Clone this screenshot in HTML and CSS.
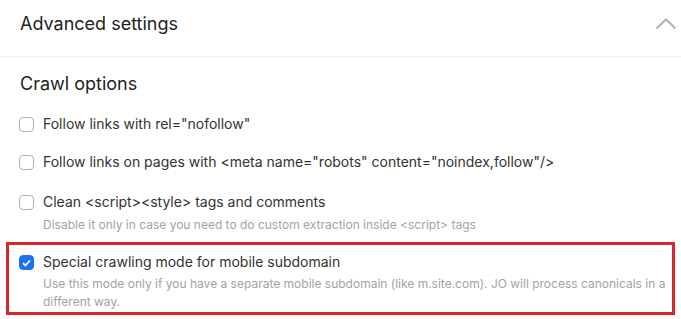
FILE: index.html
```html
<!DOCTYPE html>
<html lang="en">
<head>
    <meta charset="UTF-8">
    <title>Advanced settings</title>
    <link rel="stylesheet" href="styles.css">
</head>
<body>
    <div class="panel">
        <div class="panel-header">
            <span class="panel-title">Advanced settings</span>
            <svg class="chevron" width="22" height="12" viewBox="0 0 22 12">
                <path d="M1.5 10.5 L11 1.5 L20.5 10.5" fill="none" stroke="#b3b3b3" stroke-width="2"/>
            </svg>
        </div>

        <div class="section">
            <h3>Crawl options</h3>

            <div class="option">
                <span class="box"></span>
                <div class="text">
                    <div class="label">Follow links with rel="nofollow"</div>
                </div>
            </div>

            <div class="option">
                <span class="box"></span>
                <div class="text">
                    <div class="label">Follow links on pages with &lt;meta name="robots" content="noindex,follow"/&gt;</div>
                </div>
            </div>

            <div class="option third">
                <span class="box"></span>
                <div class="text">
                    <div class="label">Clean &lt;script&gt;&lt;style&gt; tags and comments</div>
                    <div class="desc">Disable it only in case you need to do custom extraction inside &lt;script&gt; tags</div>
                </div>
            </div>

            <div class="option highlight">
                <span class="box checked">
                    <svg width="9" height="8" viewBox="0 0 9 8">
                        <path d="M1 4.2 L3.4 6.4 L8 1.5" fill="none" stroke="#fff" stroke-width="1.8"/>
                    </svg>
                </span>
                <div class="text">
                    <div class="label">Special crawling mode for mobile subdomain</div>
                    <div class="desc">Use this mode only if you have a separate mobile subdomain (like m.site.com). JO will process canonicals in a different way.</div>
                </div>
            </div>
        </div>
    </div>
</body>
</html>
```

FILE: styles.css
```css
body{
    margin: 0;
    background-color: #fff;
    font-family: Inter, "Noto Sans", sans-serif;
    color: #333;
}

.panel-header{
    display: flex;
    justify-content: space-between;
    align-items: flex-start;
    height: 44px;
    padding: 12px 4px 0 20px;
    border-bottom: 1px solid #eeeeee;
}

.panel-title{
    font-size: 18px;
    line-height: 24px;
    color: #222;
}

.chevron{
    margin-top: 6px;
}

.section h3{
    margin: 0;
    padding: 15px 20px 0;
    font-size: 18px;
    line-height: 24px;
    font-weight: 400;
    color: #222;
}

.option{
    display: flex;
    align-items: flex-start;
    gap: 9px;
    padding: 0 19px;
    margin-top: 18px;
}

.option.third{
    margin-top: 20px;
}

.box{
    flex: none;
    width: 13px;
    height: 13px;
    margin-top: 3px;
    border: 1px solid #b0b0b0;
    border-radius: 4px;
    display: flex;
    align-items: center;
    justify-content: center;
}

.box.checked{
    background-color: #1a73ef;
    border-color: #1a73ef;
}

.label{
    font-size: 14px;
    line-height: 20px;
    color: #333;
}

.desc{
    margin-top: 4px;
    font-size: 12px;
    line-height: 18px;
    color: #a3a3a3;
}

.highlight{
    margin: 8px 6px 0;
    padding: 7px 4px 0 10px;
    height: 60px;
    border: 3px solid #d9262e;
}

.highlight .desc{
    margin-top: 3px;
}
```
